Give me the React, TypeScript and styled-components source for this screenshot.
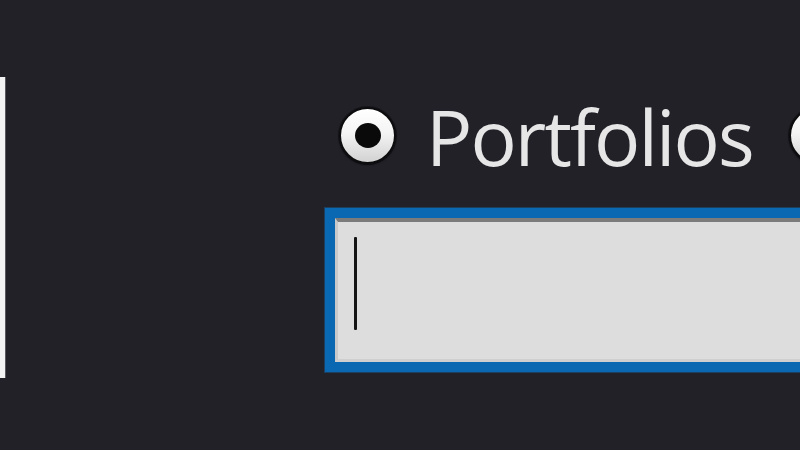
import React from "react";
import styled, { createGlobalStyle } from "styled-components";

const GlobalStyle = createGlobalStyle`
  html, body {
    margin: 0;
    padding: 0;
    background: #222128;
    overflow: hidden;
  }
`;

const Screen = styled.div`
  display: flex;
  width: 800px;
  height: 450px;
  background: #222128;
  overflow: hidden;
`;

const SidePanel = styled.div`
  flex: none;
  width: 5px;
  height: 301px;
  margin-top: 77px;
  background: #f3f3f3;
  border-right: 1px solid #5a5a5e;
`;

const Form = styled.div`
  display: flex;
  flex-direction: column;
  margin-left: 319px;
  padding-top: 106px;
`;

const RadioRow = styled.div`
  display: flex;
  align-items: center;
  height: 59px;
  margin-left: 14px;
  white-space: nowrap;
`;

const Radio = styled.span<{ $checked?: boolean }>`
  flex: none;
  width: 53px;
  height: 53px;
  border-radius: 50%;
  border: 2px solid #0c0c0e;
  background: linear-gradient(#ffffff 0%, #f4f4f4 45%, #d2d2d2 100%);
  box-shadow: 0 1px 2px rgba(0, 0, 0, 0.6), 0 0 0 1px rgba(0, 0, 0, 0.35);
  display: flex;
  align-items: center;
  justify-content: center;
  &::after {
    content: "";
    display: ${(p) => (p.$checked ? "block" : "none")};
    width: 26px;
    height: 25px;
    border-radius: 50%;
    background: #0a0a0a;
  }
`;

const Label = styled.span`
  font-family: "Open Sans", "Noto Sans", sans-serif;
  font-size: 77px;
  font-weight: 500;
  letter-spacing: -1.9px;
  line-height: 1;
  color: #e6e6e6;
  margin-left: 30px;
  margin-right: 36px;
  margin-top: 2px;
`;

const Field = styled.div`
  margin-top: 43px;
  width: 620px;
  height: 144px;
  border: 10px solid #0a67b2;
  box-shadow: inset 0 0 0 1px #1f7ccc, 0 0 0 1px #1c3f60;
  background: #dddddd;
  display: flex;
`;

const FieldInner = styled.div`
  flex: 1;
  border-top: 4px solid #7b7b7b;
  border-left: 3px solid #c9c9c9;
  border-bottom: 3px solid #cfcfcf;
  padding: 15px 0 0 16px;
`;

const Caret = styled.div`
  width: 3px;
  height: 93px;
  border-radius: 1px;
  background: #141414;
`;

export default function App() {
  return (
    <>
      <GlobalStyle />
      <Screen>
        <SidePanel />
        <Form>
          <RadioRow>
            <Radio $checked />
            <Label>Portfolios</Label>
            <Radio />
          </RadioRow>
          <Field>
            <FieldInner>
              <Caret />
            </FieldInner>
          </Field>
        </Form>
      </Screen>
    </>
  );
}
